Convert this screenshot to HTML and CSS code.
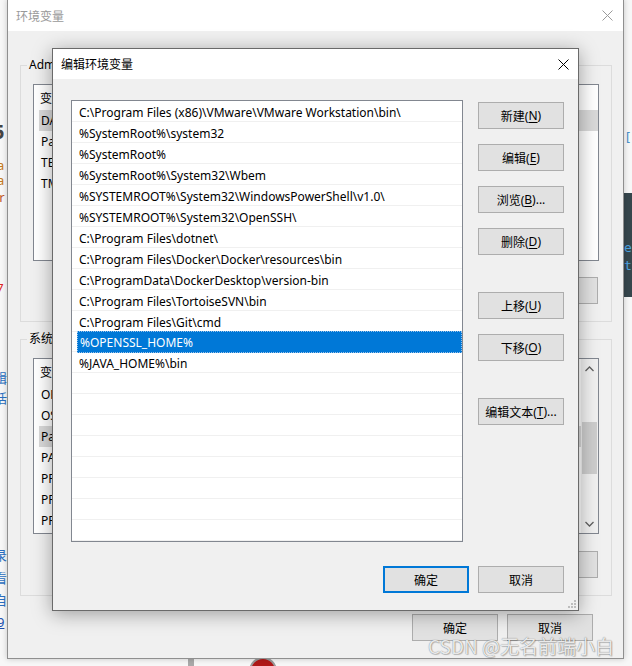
FILE: index.html
```html
<!DOCTYPE html>
<html lang="zh-CN">
<head>
<meta charset="utf-8">
<title>编辑环境变量</title>
<link rel="stylesheet" href="styles.css">
</head>
<body>
<div class="desk">
  <div class="backdrop">
    <span class="frag f-five">5</span>
    <span class="frag f-or1">a</span>
    <span class="frag f-or2">a</span>
    <span class="frag f-or3">er</span>
    <span class="frag f-red">c7</span>
    <span class="frag f-bl1">辑</span>
    <span class="frag f-bl2">括</span>
    <span class="frag f-bl3">录</span>
    <span class="frag f-bl4">看</span>
    <span class="frag f-bl5">自</span>
    <span class="frag f-bl6">9</span>
    <div class="code-block"><span>er</span><span>ti</span></div>
    <span class="frag f-code">[:</span>
    <div class="bottom-bar"></div>
    <div class="red-dot"></div>
  </div>

  <div class="win outer">
    <div class="titlebar">
      <span class="title inactive">环境变量</span>
      <svg class="close" width="11" height="11" viewBox="0 0 11 11"><path d="M0.5 0.5L10.5 10.5M10.5 0.5L0.5 10.5" stroke="#9a9a9a" stroke-width="1"/></svg>
    </div>
    <div class="outer-body">
      <fieldset class="group first">
        <legend>Administrator 的用户变量(<u>U</u>)</legend>
        <div class="vlist user">
          <div class="vhead"><span class="c1">变量</span><span>值</span></div>
          <div class="vrow sel"><span class="c1">DATA_HOME</span><span>D:\data</span></div>
          <div class="vrow"><span class="c1">Path</span><span>%USERPROFILE%\AppData\Local\Microsoft\WindowsApps;</span></div>
          <div class="vrow"><span class="c1">TEMP</span><span>%USERPROFILE%\AppData\Local\Temp</span></div>
          <div class="vrow"><span class="c1">TMP</span><span>%USERPROFILE%\AppData\Local\Temp</span></div>
        </div>
        <div class="btnrow">
          <button class="btn">新建(<u>N</u>)...</button>
          <button class="btn">编辑(<u>E</u>)...</button>
          <button class="btn">删除(<u>D</u>)</button>
        </div>
      </fieldset>
      <fieldset class="group second">
        <legend>系统变量(<u>S</u>)</legend>
        <div class="vlist sys">
          <div class="vlist-inner">
            <div class="vhead"><span class="c1">变量</span><span>值</span></div>
            <div class="vrow"><span class="c1">OPENSSL_HOME</span><span>C:\Program Files\OpenSSL</span></div>
            <div class="vrow"><span class="c1">OS</span><span>Windows_NT</span></div>
            <div class="vrow sel"><span class="c1">Path</span><span>C:\Program Files (x86)\VMware\VMware Workstation\bin\;</span></div>
            <div class="vrow"><span class="c1">PATHEXT</span><span>.COM;.EXE;.BAT;.CMD</span></div>
            <div class="vrow"><span class="c1">PROCESSOR_ARCHITECTURE</span><span>AMD64</span></div>
            <div class="vrow"><span class="c1">PROCESSOR_IDENTIFIER</span><span>Intel64 Family 6</span></div>
            <div class="vrow"><span class="c1">PROCESSOR_LEVEL</span><span>6</span></div>
          </div>
          <div class="vscroll">
            <svg width="9" height="6" viewBox="0 0 9 6"><path d="M0.5 5L4.5 1L8.5 5" fill="none" stroke="#606060" stroke-width="1.3"/></svg>
            <div class="thumb-track"><div class="thumb"></div></div>
            <svg width="9" height="6" viewBox="0 0 9 6"><path d="M0.5 1L4.5 5L8.5 1" fill="none" stroke="#606060" stroke-width="1.3"/></svg>
          </div>
        </div>
        <div class="btnrow">
          <button class="btn">新建(<u>W</u>)...</button>
          <button class="btn">编辑(<u>I</u>)...</button>
          <button class="btn">删除(<u>L</u>)</button>
        </div>
      </fieldset>
      <div class="footer outer-footer">
        <button class="btn">确定</button>
        <button class="btn">取消</button>
      </div>
    </div>
  </div>

  <div class="win edit">
    <div class="titlebar">
      <span class="title">编辑环境变量</span>
      <svg class="close" width="11" height="11" viewBox="0 0 11 11"><path d="M0.5 0.5L10.5 10.5M10.5 0.5L0.5 10.5" stroke="#000" stroke-width="1"/></svg>
    </div>
    <div class="edit-body">
      <div class="edit-grid">
        <div class="plist">
          <div class="prow">C:\Program Files (x86)\VMware\VMware Workstation\bin\</div>
          <div class="prow">%SystemRoot%\system32</div>
          <div class="prow">%SystemRoot%</div>
          <div class="prow">%SystemRoot%\System32\Wbem</div>
          <div class="prow">%SYSTEMROOT%\System32\WindowsPowerShell\v1.0\</div>
          <div class="prow">%SYSTEMROOT%\System32\OpenSSH\</div>
          <div class="prow">C:\Program Files\dotnet\</div>
          <div class="prow">C:\Program Files\Docker\Docker\resources\bin</div>
          <div class="prow">C:\ProgramData\DockerDesktop\version-bin</div>
          <div class="prow">C:\Program Files\TortoiseSVN\bin</div>
          <div class="prow">C:\Program Files\Git\cmd</div>
          <div class="prow selected"><span>%OPENSSL_HOME%</span></div>
          <div class="prow">%JAVA_HOME%\bin</div>
          <div class="prow"></div>
          <div class="prow"></div>
          <div class="prow"></div>
          <div class="prow"></div>
          <div class="prow"></div>
          <div class="prow"></div>
          <div class="prow"></div>
          <div class="prow"></div>
          <div class="prow"></div>
        </div>
        <div class="btncol">
          <button class="btn">新建(<u>N</u>)</button>
          <button class="btn">编辑(<u>E</u>)</button>
          <button class="btn">浏览(<u>B</u>)...</button>
          <button class="btn">删除(<u>D</u>)</button>
          <button class="btn spaced">上移(<u>U</u>)</button>
          <button class="btn">下移(<u>O</u>)</button>
          <button class="btn spaced">编辑文本(<u>T</u>)...</button>
        </div>
      </div>
      <div class="footer">
        <button class="btn default">确定</button>
        <button class="btn">取消</button>
      </div>
      <svg class="grip" width="9" height="9" viewBox="0 0 9 9">
        <rect x="7" y="1" width="2" height="2" fill="#bdbdbd"/>
        <rect x="4" y="4" width="2" height="2" fill="#bdbdbd"/>
        <rect x="7" y="4" width="2" height="2" fill="#bdbdbd"/>
        <rect x="1" y="7" width="2" height="2" fill="#bdbdbd"/>
        <rect x="4" y="7" width="2" height="2" fill="#bdbdbd"/>
        <rect x="7" y="7" width="2" height="2" fill="#bdbdbd"/>
      </svg>
    </div>
  </div>

  <div class="watermark">CSDN @无名前端小白</div>
</div>
</body>
</html>
```

FILE: styles.css
```css
* { box-sizing: border-box; }
html, body { margin: 0; padding: 0; }
body {
  width: 632px;
  height: 666px;
  overflow: hidden;
  background: #f7f7f7;
  font-family: "Noto Sans", "Noto Sans CJK SC", sans-serif;
  font-size: 12px;
  color: #000;
}
.desk {
  position: relative;
  width: 632px;
  height: 666px;
  overflow: hidden;
}
u { text-decoration: underline; text-underline-offset: 2px; }

/* backdrop fragments (page behind the dialogs) */
.backdrop { position: absolute; inset: 0; }
.frag { position: absolute; font-size: 13px; line-height: 16px; }
.f-five { left: -7px; top: 124px; font-size: 20px; font-weight: bold; color: #444; }
.f-or1 { left: -3px; top: 157px; color: #c57a22; }
.f-or2 { left: -3px; top: 172px; color: #c57a22; }
.f-or3 { left: -8px; top: 189px; color: #c0561e; }
.f-red { left: -10px; top: 280px; color: #d22; }
.f-bl1 { left: -6px; top: 370px; color: #2a6fc0; }
.f-bl2 { left: -6px; top: 390px; color: #2a6fc0; }
.f-bl3 { left: -6px; top: 547px; color: #2a6fc0; }
.f-bl4 { left: -6px; top: 570px; color: #2a6fc0; }
.f-bl5 { left: -6px; top: 592px; color: #2a6fc0; }
.f-bl6 { left: -3px; top: 614px; color: #1a4fb0; text-decoration: underline; }
.f-code { left: 624px; top: 130px; color: #4a90c8; font-family: "DejaVu Sans Mono", monospace; }
.code-block {
  position: absolute; left: 624px; top: 193px; width: 10px; height: 104px;
  background: #36464c; color: #4da3e0;
  font-family: "DejaVu Sans Mono", monospace; font-size: 13px;
  display: flex; flex-direction: column; padding-top: 46px; line-height: 18px;
}
.bottom-bar { position: absolute; left: 188px; top: 658px; width: 6px; height: 8px; background: #a9a9a9; }
.red-dot {
  position: absolute; left: 249px; top: 657px; width: 28px; height: 28px;
  border-radius: 50%; background: #b01818; border: 2px solid #9a9a9a;
}

/* windows */
.win {
  position: absolute;
  background: #f0f0f0;
  display: flex;
  flex-direction: column;
}
.outer {
  left: 7px; top: -1px; width: 617px; height: 660px;
  border: 1px solid #8f8f8f;
  box-shadow: 0 0 6px rgba(0,0,0,0.2);
}
.edit {
  left: 52px; top: 48px; width: 527px; height: 563px;
  border: 1px solid #6a6a6a;
  box-shadow: 0 3px 18px rgba(0,0,0,0.35);
}
.titlebar {
  height: 31px;
  background: #fff;
  display: flex;
  align-items: center;
  justify-content: space-between;
  padding: 0 10px 0 8px;
  flex: none;
}
.edit .titlebar { height: 30px; padding-right: 9px; }
.title { font-size: 12px; }
.title.inactive { color: #999; }

/* outer dialog body */
.outer-body { padding: 0 11px 0 12px; display: flex; flex-direction: column; }
.group {
  margin: 0; border: 1px solid #dcdcdc;
  padding: 0 12px 17px 12px;
  min-width: 0;
}
.group.first { margin-top: 26px; }
.group.second { margin-top: 9px; }
.group legend {
  padding: 0 2px; margin-left: -6px;
  line-height: 16px; font-size: 12px;
}
.vlist {
  margin-top: 11px;
  background: #fff;
  border: 1px solid #828790;
  overflow: hidden;
}
.vlist.user { height: 177px; }
.vlist.sys { height: 176px; display: flex; }
.vlist-inner { flex: 1; min-width: 0; }
.vhead {
  height: 25px; display: flex; align-items: center; padding-left: 6px;
  white-space: nowrap;
}
.vrow {
  height: 21px; display: flex; align-items: center;
  margin-left: 5px; padding-left: 2px; white-space: nowrap;
}
.vrow.sel { background: #d9d9d9; }
.c1 { width: 200px; flex: none; }
.vscroll {
  width: 17px; flex: none; background: #f0f0f0;
  display: flex; flex-direction: column; align-items: center;
  padding: 7px 0 6px;
}
.thumb-track { flex: 1; width: 100%; padding: 50px 1px 47px; }
.thumb { height: 100%; background: #cdcdcd; }
.btnrow { margin-top: 16px; display: flex; justify-content: flex-end; gap: 9px; padding-right: 1px; }
.group.second .btnrow { margin-top: 17px; }

.btn {
  width: 86px; height: 27px;
  background: #e1e1e1;
  border: 1px solid #adadad;
  font-family: "Noto Sans", "Noto Sans CJK SC", sans-serif;
  font-size: 12px;
  color: #000;
  padding: 0;
  display: flex; align-items: center; justify-content: center;
  white-space: nowrap;
}
.btn.default { border: 2px solid #0078d7; }

.footer { display: flex; justify-content: flex-end; gap: 9px; }
.outer-footer { margin-top: 18px; padding-right: 19px; }

/* edit dialog body */
.edit-body {
  position: relative;
  flex: 1;
  padding: 21px 14px 0 18px;
}
.edit-grid {
  display: grid;
  grid-template-columns: 392px 86px;
  column-gap: 15px;
}
.plist {
  height: 442px;
  background: #fff;
  border: 1px solid #828790;
  overflow: hidden;
}
.prow {
  height: 21px;
  border-bottom: 1px solid #f0f0f0;
  padding-left: 7px;
  padding-top: 1px;
  line-height: 21px;
  white-space: nowrap;
}
.prow.selected { padding-left: 5px; padding-top: 0; }
.prow.selected span {
  display: block;
  height: 22px;
  margin-top: -1px;
  background: #0078d7;
  color: #fff;
  border: 1px dotted #9cc3ea;
  padding-left: 2px;
  line-height: 21px;
}
.btncol { display: flex; flex-direction: column; padding-top: 2px; }
.btncol .btn + .btn { margin-top: 15px; }
.btncol .btn.spaced { margin-top: 37px; }
.edit-body .footer { margin-top: 24px; }
.grip { position: absolute; right: 2px; bottom: 2px; }

.watermark {
  position: absolute; left: 428px; top: 634px;
  font-family: "Noto Sans CJK SC", sans-serif;
  font-size: 19px; line-height: 24px;
  color: rgba(250,250,250,0.9);
  text-shadow: 0 0 1px rgba(0,0,0,0.55), 1px 1px 1px rgba(0,0,0,0.2);
  white-space: nowrap;
}
```
